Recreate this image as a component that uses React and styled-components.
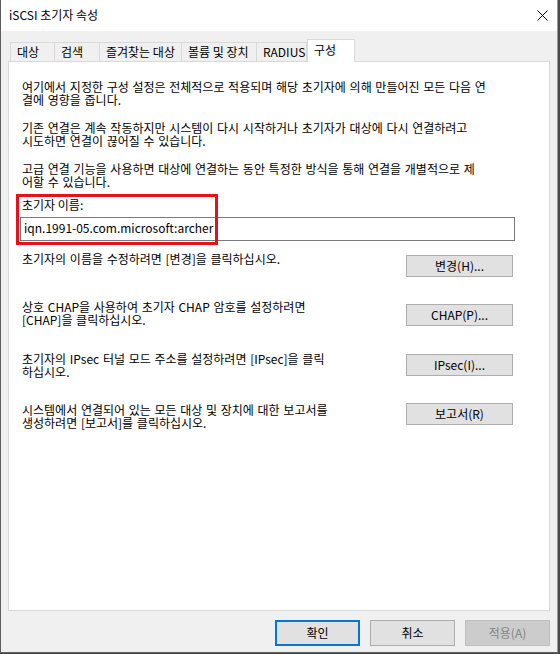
import React from 'react'
import styled, { createGlobalStyle } from 'styled-components'

const Global = createGlobalStyle`
    html, body {
        margin:0;
        padding:0;
        background:#4a4a4a;
    }
    body {
        font-family:"Noto Sans CJK KR", "Noto Sans", sans-serif;
        font-size:12px;
        color:#000;
    }
`

const Window = styled.div`
    box-sizing:border-box;
    width:558px;
    height:653px;
    background:#f0f0f0;
    border-left:1px solid #5c5c5c;
    border-right:1px solid #9a9a9a;
    border-bottom:1px solid #5c5c5c;
    display:flex;
    flex-direction:column;
`

const TitleBar = styled.div`
    height:31px;
    background:#fff;
    display:flex;
    align-items:center;
    justify-content:space-between;
    padding:0 8px 0 8px;
`

const Title = styled.span`
    font-size:12px;
    line-height:14px;
    margin-top:-1px;
`

const Close = styled.svg`
    width:11px;
    height:11px;
    margin-right:1px;
`

const Body = styled.div`
    flex:1;
    display:flex;
    flex-direction:column;
    padding:8px 7px 0 7px;
`

const TabStrip = styled.div`
    display:flex;
    align-items:flex-end;
    height:23px;
    padding-left:2px;
    position:relative;
    z-index:1;
    margin-bottom:-1px;
`

const Tab = styled.div`
    box-sizing:border-box;
    width:${p => p.w}px;
    height:${p => (p.active ? 23 : 20)}px;
    border:1px solid #d9d9d9;
    border-bottom:${p => (p.active ? 'none' : '1px solid #d9d9d9')};
    border-left:${p => (p.first || p.active ? '1px solid #d9d9d9' : 'none')};
    background:${p => (p.active ? '#fff' : '#f0f0f0')};
    padding:${p => (p.active ? '0 0 3px 6px' : '0 0 0 6px')};
    display:flex;
    align-items:center;
    white-space:nowrap;
    line-height:14px;
`

const Panel = styled.div`
    box-sizing:border-box;
    height:550px;
    background:#fff;
    border:1px solid #d9d9d9;
    padding:18px 36px 0 13px;
    display:flex;
    flex-direction:column;
`

const Para = styled.p`
    margin:0 0 ${p => p.gap || 15}px 0;
    line-height:13px;
    white-space:nowrap;
    word-spacing:1px;
`

const FieldGroup = styled.div`
    position:relative;
    display:flex;
    flex-direction:column;
    gap:6px;
`

const Label = styled.div`
    line-height:13px;
`

const Input = styled.div`
    box-sizing:border-box;
    width:495px;
    height:24px;
    margin-left:-2px;
    border:1px solid #7a7a7a;
    background:#fff;
    padding:3px 0 0 3px;
    line-height:14px;
`

const Highlight = styled.div`
    position:absolute;
    left:-6px;
    top:-4px;
    width:202px;
    height:51px;
    box-sizing:border-box;
    border:3px solid #e8101a;
    pointer-events:none;
`

const Rows = styled.div`
    display:flex;
    flex-direction:column;
`

const Row = styled.div`
    display:flex;
    justify-content:space-between;
    align-items:flex-start;
    min-height:26px;
    margin-top:${p => p.mt}px;
`

const RowText = styled.div`
    line-height:13px;
    white-space:nowrap;
    word-spacing:1px;
`

const Button = styled.button`
    box-sizing:border-box;
    width:${p => p.w || 107}px;
    height:${p => p.h || 22}px;
    margin-top:${p => p.mt || 0}px;
    background:${p => (p.disabled ? '#cccccc' : '#e1e1e1')};
    color:${p => (p.disabled ? '#838383' : '#000')};
    border:${p => (p.primary ? '2px solid #0078d7' : p.disabled ? '1px solid #bfbfbf' : '1px solid #adadad')};
    font-family:inherit;
    font-size:12px;
    line-height:14px;
    padding:0;
    display:flex;
    align-items:center;
    justify-content:center;
`

const Footer = styled.div`
    display:flex;
    justify-content:flex-end;
    gap:10px;
    padding-top:9px;
`

const tabs = [
    { label: '대상', w: 45 },
    { label: '검색', w: 45 },
    { label: '즐겨찾는 대상', w: 82 },
    { label: '볼륨 및 장치', w: 75 },
    { label: 'RADIUS', w: 50 },
    { label: '구성', w: 48, active: true },
]

const rows = [
    { mt: 11, btnTop: 3, button: '변경(H)...', lines: ['초기자의 이름을 수정하려면 [변경]을 클릭하십시오.'] },
    { mt: 22, btnTop: 4, button: 'CHAP(P)...', lines: ['상호 CHAP을 사용하여 초기자 CHAP 암호를 설정하려면', '[CHAP]을 클릭하십시오.'] },
    { mt: 26, btnTop: 2, button: 'IPsec(I)...', lines: ['초기자의 IPsec 터널 모드 주소를 설정하려면 [IPsec]을 클릭', '하십시오.'] },
    { mt: 25, btnTop: 0, button: '보고서(R)', lines: ['시스템에서 연결되어 있는 모든 대상 및 장치에 대한 보고서를', '생성하려면 [보고서]를 클릭하십시오.'] },
]

export default function App() {
    return (
        <>
            <Global />
            <Window>
                <TitleBar>
                    <Title>iSCSI 초기자 속성</Title>
                    <Close viewBox="0 0 11 11">
                        <path d="M0.5 0.5 L10.5 10.5 M10.5 0.5 L0.5 10.5" stroke="#000" strokeWidth="1" fill="none" />
                    </Close>
                </TitleBar>
                <Body>
                    <TabStrip>
                        {tabs.map((t, i) => (
                            <Tab key={t.label} w={t.w} active={t.active} first={i === 0}>{t.label}</Tab>
                        ))}
                    </TabStrip>
                    <Panel>
                        <Para>
                            여기에서 지정한 구성 설정은 전체적으로 적용되며 해당 초기자에 의해 만들어진 모든 다음 연<br />
                            결에 영향을 줍니다.
                        </Para>
                        <Para>
                            기존 연결은 계속 작동하지만 시스템이 다시 시작하거나 초기자가 대상에 다시 연결하려고<br />
                            시도하면 연결이 끊어질 수 있습니다.
                        </Para>
                        <Para gap={10}>
                            고급 연결 기능을 사용하면 대상에 연결하는 동안 특정한 방식을 통해 연결을 개별적으로 제<br />
                            어할 수 있습니다.
                        </Para>
                        <FieldGroup>
                            <Label>초기자 이름:</Label>
                            <Input>iqn.1991-05.com.microsoft:archer</Input>
                            <Highlight />
                        </FieldGroup>
                        <Rows>
                            {rows.map(r => (
                                <Row key={r.button} mt={r.mt}>
                                    <RowText>
                                        {r.lines.map((l, i) => (
                                            <React.Fragment key={i}>{i > 0 && <br />}{l}</React.Fragment>
                                        ))}
                                    </RowText>
                                    <Button mt={r.btnTop}>{r.button}</Button>
                                </Row>
                            ))}
                        </Rows>
                    </Panel>
                    <Footer>
                        <Button w={85} h={26} primary>확인</Button>
                        <Button w={85} h={26}>취소</Button>
                        <Button w={85} h={26} disabled>적용(A)</Button>
                    </Footer>
                </Body>
            </Window>
        </>
    )
}
